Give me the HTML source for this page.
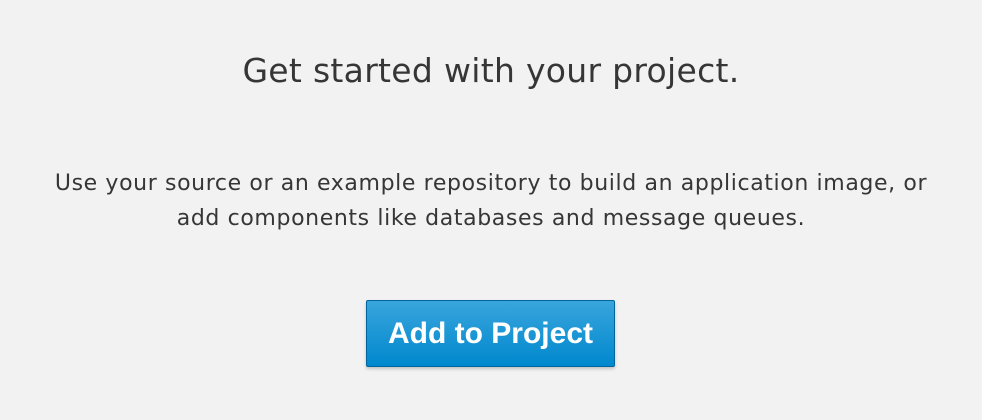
<!DOCTYPE html>
<html><head><style>
html,body{margin:0;padding:0;background:#f2f2f2;width:982px;height:420px;overflow:hidden;font-family:"Liberation Sans",sans-serif;}
h1{position:absolute;top:48px;left:0;width:982px;text-align:center;margin:0;font-weight:normal;font-family:"DejaVu Sans",sans-serif;font-size:33px;letter-spacing:0.3px;line-height:46px;color:#363636;}
p{position:absolute;top:166px;left:0;width:982px;text-align:center;margin:0;font-family:"DejaVu Sans",sans-serif;font-size:22px;letter-spacing:0.62px;line-height:35px;color:#363636;}
.btn{position:absolute;left:366px;top:300px;width:249px;height:67px;box-sizing:border-box;border:1px solid #00659c;border-radius:2px;background:linear-gradient(#39a5dc,#0088ce);color:#fff;font-weight:bold;font-size:30px;text-align:center;line-height:65px;box-shadow:0 2px 3px rgba(0,0,0,.2);}
</style></head><body>
<h1>Get started with your project.</h1>
<p>Use your source or an example repository to build an application image, or<br>add components like databases and message queues.</p>
<div class="btn">Add to Project</div>
</body></html>
